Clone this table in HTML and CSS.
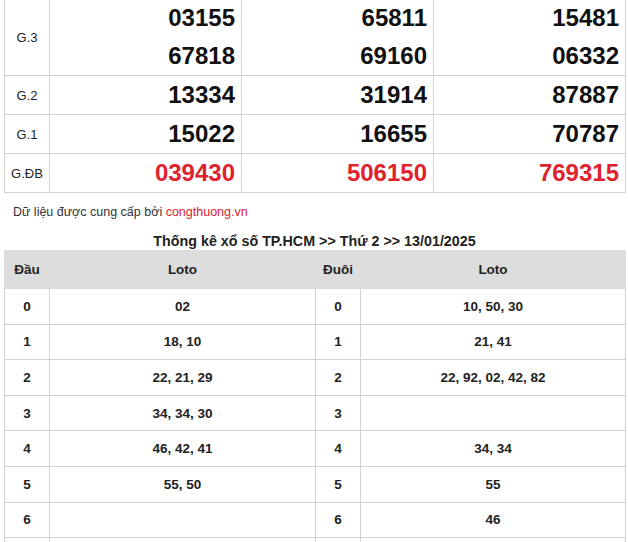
FILE: index.html
```html
<!DOCTYPE html>
<html lang="vi">
<head>
<meta charset="utf-8">
<link rel="stylesheet" href="styles.css">
</head>
<body>
<div class="page">
  <table class="kq">
    <colgroup><col class="c-label"><col class="c-num"><col class="c-num"><col class="c-num"></colgroup>
    <tr>
      <td class="lbl">G.3</td>
      <td class="num"><div>03155</div><div>67818</div></td>
      <td class="num"><div>65811</div><div>69160</div></td>
      <td class="num"><div>15481</div><div>06332</div></td>
    </tr>
    <tr>
      <td class="lbl">G.2</td>
      <td class="num"><div>13334</div></td>
      <td class="num"><div>31914</div></td>
      <td class="num"><div>87887</div></td>
    </tr>
    <tr>
      <td class="lbl">G.1</td>
      <td class="num"><div>15022</div></td>
      <td class="num"><div>16655</div></td>
      <td class="num"><div>70787</div></td>
    </tr>
    <tr>
      <td class="lbl">G.ĐB</td>
      <td class="num red"><div>039430</div></td>
      <td class="num red"><div>506150</div></td>
      <td class="num red"><div>769315</div></td>
    </tr>
  </table>

  <p class="source">Dữ liệu được cung cấp bởi <a href="#" class="link">congthuong.vn</a></p>

  <h3 class="title">Thống kê xổ số TP.HCM &gt;&gt; Thứ 2 &gt;&gt; 13/01/2025</h3>

  <table class="loto">
    <colgroup><col class="c-k1"><col class="c-v1"><col class="c-k2"><col class="c-v2"></colgroup>
    <tr class="head"><th>Đầu</th><th>Loto</th><th>Đuôi</th><th>Loto</th></tr>
    <tr><td>0</td><td>02</td><td>0</td><td>10, 50, 30</td></tr>
    <tr><td>1</td><td>18, 10</td><td>1</td><td>21, 41</td></tr>
    <tr><td>2</td><td>22, 21, 29</td><td>2</td><td>22, 92, 02, 42, 82</td></tr>
    <tr><td>3</td><td>34, 34, 30</td><td>3</td><td></td></tr>
    <tr><td>4</td><td>46, 42, 41</td><td>4</td><td>34, 34</td></tr>
    <tr><td>5</td><td>55, 50</td><td>5</td><td>55</td></tr>
    <tr><td>6</td><td></td><td>6</td><td>46</td></tr>
    <tr><td>7</td><td>76</td><td>7</td><td></td></tr>
  </table>
</div>
</body>
</html>
```

FILE: styles.css
```css
html, body {
  margin: 0;
  padding: 0;
  background: #fff;
}
body {
  font-family: "Liberation Sans", Arial, sans-serif;
  color: #222;
  overflow: hidden;
}
.page {
  width: 621px;
  margin-left: 4px;
  margin-top: -2px;
}
table {
  border-collapse: collapse;
  table-layout: fixed;
  width: 621px;
}
.kq td {
  border: 1px solid #d2d2d2;
  padding: 0;
}
.c-label { width: 45px; }
.c-num { width: 192px; }
.lbl {
  text-align: center;
  font-size: 13px;
  color: #222;
}
.num {
  text-align: right;
  font-size: 24px;
  font-weight: bold;
  color: #111;
}
.num div {
  line-height: 38px;
  height: 38px;
  padding-right: 6px;
}
.red { color: #e0222c; }

.source {
  margin: 10px 0 0 9px;
  font-size: 12.5px;
  line-height: 18px;
  color: #333;
}
.link {
  color: #d9202a;
  text-decoration: none;
}
.title {
  margin: 11px 0 0;
  text-align: center;
  font-size: 14.3px;
  line-height: 18px;
  font-weight: bold;
  color: #222;
}
.c-k1 { width: 45px; }
.c-v1 { width: 266px; }
.c-k2 { width: 45px; }
.c-v2 { width: 265px; }
.loto th, .loto td {
  border: 1px solid #d2d2d2;
  text-align: center;
  font-size: 13.5px;
  font-weight: bold;
  color: #222;
  padding: 0;
  height: 34.6px;
}
.loto .head th {
  background: #dddddd;
  height: 37px;
  border-color: #dddddd;
}
```
